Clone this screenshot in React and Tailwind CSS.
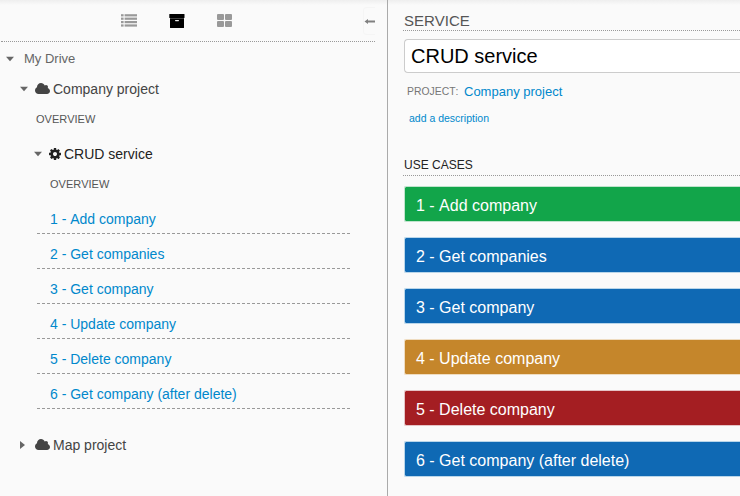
import React from "react";

const useCases = [
  { label: "1 - Add company", color: "bg-[#12a54a] border-[#bfe3cc]" },
  { label: "2 - Get companies", color: "bg-[#0f69b4] border-[#b9d6ea]" },
  { label: "3 - Get company", color: "bg-[#0f69b4] border-[#b9d6ea]" },
  { label: "4 - Update company", color: "bg-[#c5862b] border-[#efdcc0]" },
  { label: "5 - Delete company", color: "bg-[#a41e22] border-[#e5c3c5]" },
  { label: "6 - Get company (after delete)", color: "bg-[#0f69b4] border-[#b9d6ea]" },
];

function ListIcon() {
  return (
    <svg className="block h-[13px] w-4" viewBox="0 0 16 13" fill="#999">
      {[0.2, 3.6, 7, 10.4].map((y) => (
        <g key={y}>
          <rect x="0" y={y} width="2.6" height="2.2" />
          <rect x="3.6" y={y} width="12.4" height="2.2" />
        </g>
      ))}
    </svg>
  );
}

function ArchiveIcon() {
  return (
    <svg className="block h-[14px] w-4" viewBox="0 0 16 14" fill="#000">
      <rect x="0.3" y="0" width="15.2" height="4" rx="0.5" />
      <path d="M1 4.3h14v9.2a.5.5 0 0 1-.5.5h-13a.5.5 0 0 1-.5-.5z" />
      <rect x="6" y="6" width="4" height="1.2" rx="0.6" fill="#eee" />
    </svg>
  );
}

function GridIcon() {
  return (
    <svg className="block h-[13px] w-[15px]" viewBox="0 0 15 13" fill="#999">
      <rect x="0" y="0" width="7" height="6.1" rx="1" />
      <rect x="8" y="0" width="7" height="6.1" rx="1" />
      <rect x="0" y="6.9" width="7" height="6.1" rx="1" />
      <rect x="8" y="6.9" width="7" height="6.1" rx="1" />
    </svg>
  );
}

function CloudIcon() {
  return (
    <svg className="block h-[14px] w-[15px] shrink-0" viewBox="64 0 1920 1792" fill="#444">
      <path d="M1984 1152q0 159-112.5 271.5t-271.5 112.5h-1088q-185 0-316.5-131.5t-131.5-316.5q0-132 71-241.5t187-163.5q-2-28-2-43 0-212 150-362t362-150q158 0 286.5 88t187.5 230q70-62 166-62 106 0 181 75t75 181q0 75-41 138 129 30 213 134.5t84 239.5z" />
    </svg>
  );
}

function CogIcon() {
  return (
    <svg className="block h-[14px] w-[14px] shrink-0" viewBox="0 0 1792 1792" fill="#222">
      <path d="M1152 896q0-106-75-181t-181-75-181 75-75 181 75 181 181 75 181-75 75-181zm512-109v222q0 12-8 23t-20 13l-185 28q-19 54-39 91 35 50 107 138 10 12 10 25t-9 23q-27 37-99 108t-94 71q-12 0-26-9l-138-108q-44 23-91 38-16 136-29 186-7 28-36 28h-222q-14 0-24.5-8.5t-11.5-21.5l-28-184q-49-16-90-37l-141 107q-10 9-25 9-14 0-25-11-126-114-165-168-7-10-7-23 0-12 8-23 15-21 51-66.5t54-70.5q-27-50-41-99l-183-27q-13-2-21-12.5t-8-23.5v-222q0-12 8-23t19-13l186-28q14-46 39-92-40-57-107-138-10-12-10-24 0-10 9-23 26-36 98.5-107.5t94.5-71.5q13 0 26 10l138 107q44-23 91-38 16-136 29-186 7-28 36-28h222q14 0 24.5 8.5t11.5 21.5l28 184q49 16 90 37l142-107q9-9 24-9 13 0 25 10 129 119 165 170 7 8 7 22 0 12-8 23-15 21-51 66.5t-54 70.5q26 50 41 98l183 28q13 2 21 12.5t8 23.5z" />
    </svg>
  );
}

function Caret({ closed }) {
  return (
    <svg className="block h-2 w-2 shrink-0" viewBox="0 0 8 8" fill="#666">
      <path d={closed ? "M0 0v8l5-4z" : "M0 1.7h8l-4 4.6z"} />
    </svg>
  );
}

function Sidebar() {
  return (
    <aside className="flex w-[387px] shrink-0 flex-col">
      <div className="ml-px flex h-[42px] w-[374px] items-start border-b border-dotted border-[#999] pl-[120px]">
        <div className="pt-[14px]"><ListIcon /></div>
        <div className="ml-8 pt-[14px]"><ArchiveIcon /></div>
        <div className="ml-8 pt-[14px]"><GridIcon /></div>
        <div className="ml-auto mt-[7px] flex h-7 w-3 items-center justify-end rounded-l border border-r-0 border-[#f5f5f5]">
          <svg className="block h-[5px] w-[11px] shrink-0" viewBox="0 0 11 5" fill="#808080">
            <path d="M.5 2.5L4 0v1.6h7v1.8H4V5z" />
          </svg>
        </div>
      </div>
      <div className="flex h-[33px] items-center pl-[6px] text-[13px] text-[#666]">
        <Caret />
        <span className="ml-[10px]">My Drive</span>
      </div>
      <div className="flex h-7 items-center pl-5 text-[14px] leading-4 text-[#444]">
        <Caret />
        <span className="ml-[7px]"><CloudIcon /></span>
        <span className="ml-[3px]">Company project</span>
      </div>
      <div className="flex h-8 items-center pl-9 text-[11px] text-[#555]">OVERVIEW</div>
      <div className="mt-[3px] flex h-8 items-center pl-[34px] text-[14px] leading-4 text-[#222]">
        <Caret />
        <span className="ml-[6px]"><CogIcon /></span>
        <span className="ml-[2px]">CRUD service</span>
      </div>
      <div className="flex h-7 items-center pl-[50px] text-[11px] text-[#555]">OVERVIEW</div>
      <ul className="mt-px">
        {useCases.map((item) => (
          <li key={item.label} className="ml-[37px] flex h-[35px] w-[313px] items-center border-b border-dashed border-[#999] pl-[13px] pt-1.5 text-[14px] leading-4 text-[#0088cc]">
            {item.label}
          </li>
        ))}
      </ul>
      <div className="mt-5 flex h-8 items-center pl-5 text-[14px] leading-4 text-[#444]">
        <Caret closed />
        <span className="ml-[7px]"><CloudIcon /></span>
        <span className="ml-[3px]">Map project</span>
      </div>
    </aside>
  );
}

function ServicePanel() {
  return (
    <main className="flex min-w-0 grow flex-col border-l border-[#aaa] pl-[15px]">
      <h1 className="flex h-[31px] items-end border-b border-dotted border-[#999] pl-px text-[15px] leading-[19px] text-[#555]">SERVICE</h1>
      <div className="ml-px mt-2 flex h-[34px] items-center rounded-l border border-r-0 border-[#ccc] bg-white pl-[6px] text-[20px] text-black">CRUD service</div>
      <div className="flex h-[37px] items-center pl-1 text-[10.4px] text-[#777]">
        <span className="w-[50px] pt-px">PROJECT:</span>
        <span className="ml-[7px] text-[13px] text-[#0088cc]">Company project</span>
      </div>
      <div className="flex h-[18px] items-center pl-[6px] text-[10.5px] text-[#0088cc]">add a description</div>
      <h2 className="mt-[26px] flex h-[22px] items-center border-b border-dotted border-[#999] pl-[1px] text-[12px] text-[#222]">USE CASES</h2>
      <div className="ml-px mt-[10px] flex flex-col gap-[15px]">
        {useCases.map((item) => (
          <div key={item.label} className={`flex h-9 items-center rounded-l-[2px] border border-r-0 bg-clip-padding pl-[11px] pt-[3px] text-[16px] text-white ${item.color}`}>
            {item.label}
          </div>
        ))}
      </div>
    </main>
  );
}

export default function App() {
  return (
    <div className="flex h-[496px] w-[740px] overflow-hidden whitespace-nowrap bg-[#fafafa] bg-[linear-gradient(to_bottom,#eeeeee,#fafafa_5px)] font-['Liberation_Sans',Arial,sans-serif] [font-kerning:none]">
      <Sidebar />
      <ServicePanel />
    </div>
  );
}
